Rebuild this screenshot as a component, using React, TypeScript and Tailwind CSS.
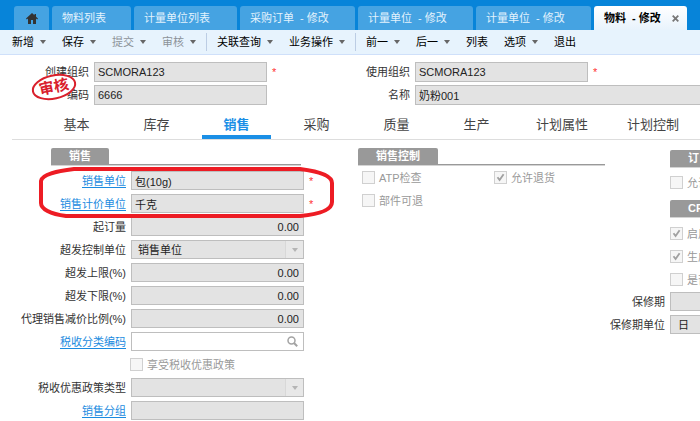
import type { ReactNode } from "react";
import clsx from "clsx";

const docTabs = [
  { title: "物料列表", width: "w-[79px]" },
  { title: "计量单位列表", width: "w-[103px]" },
  { title: "采购订单  - 修改", width: "w-[115px]" },
  { title: "计量单位  - 修改", width: "w-[115px]" },
  { title: "计量单位  - 修改", width: "w-[115px]" },
];

const toolbarGroups = [
  [
    { text: "新增", menu: true },
    { text: "保存", menu: true },
    { text: "提交", menu: true, disabled: true },
    { text: "审核", menu: true, disabled: true },
  ],
  [
    { text: "关联查询", menu: true },
    { text: "业务操作", menu: true },
  ],
  [
    { text: "前一", menu: true },
    { text: "后一", menu: true },
    { text: "列表" },
    { text: "选项", menu: true },
    { text: "退出" },
  ],
];

const pages = ["基本", "库存", "销售", "采购", "质量", "生产", "计划属性", "计划控制"];

const Caret = ({ className }: { className?: string }) => (
  <svg viewBox="0 0 6 4" className={clsx("h-1 w-[6px] shrink-0", className)}>
    <path d="M0 0h6L3 4z" fill="currentColor" />
  </svg>
);

const SectionTitle = ({ children, className }: { children: ReactNode; className?: string }) => (
  <div className={clsx("flex border-b border-[#999] shadow-[0_1px_0_#d4d4d4]", className)}>
    <h2 className="h-4 rounded-t-[2px] bg-[#999] px-[18px] leading-4 font-bold text-white">{children}</h2>
  </div>
);

const inputClass = "min-w-0 border border-[#bebebe] px-[3px] text-[#222] outline-none";

type FieldProps = {
  id: string;
  label: string;
  value?: string;
  link?: boolean;
  required?: boolean;
  number?: boolean;
  select?: boolean;
  search?: boolean;
};

const Field = ({ id, label, value = "", link, required, number, select, search }: FieldProps) => (
  <div className="flex h-[19px] items-center">
    <label htmlFor={id} className="w-[126px] shrink-0 text-right text-[#333]">
      {link ? (
        <a href="#" className="text-[#1b8be0] underline underline-offset-2">
          {label}
        </a>
      ) : (
        label
      )}
    </label>
    <div className="relative ml-[5px] flex w-[173px] shrink-0">
      {select ? (
        <>
          <select id={id} className={clsx(inputClass, "h-[19px] w-full appearance-none bg-[#e3e3e3] pl-[6px]")}>
            <option>{value}</option>
          </select>
          <span className="pointer-events-none absolute inset-y-px right-px flex w-[18px] items-center justify-center border-l border-[#d8d8d8] bg-[#e8e8e8] text-[#b5b5b5]">
            <Caret />
          </span>
        </>
      ) : (
        <input
          id={id}
          readOnly={!search}
          defaultValue={value}
          className={clsx(inputClass, "h-[19px] w-full", number && "pr-1 text-right", search ? "bg-white" : "bg-[#e3e3e3]")}
        />
      )}
      {search && (
        <svg viewBox="0 0 11 11" className="absolute top-1 right-[6px] h-[11px] w-[11px]" fill="none" stroke="#a3a3a3">
          <circle cx="4.5" cy="4.5" r="3.5" strokeWidth="1.5" />
          <path d="M7 7l3.2 3.2" strokeWidth="2" />
        </svg>
      )}
    </div>
    {required && <span className="ml-[5px] text-[#f33]">*</span>}
  </div>
);

const HeadField = ({ id, label, value, required, wide }: { id: string; label: string; value: string; required?: boolean; wide?: boolean }) => (
  <div className="flex h-5 items-center">
    <label htmlFor={id} className="w-[89px] shrink-0 text-right text-[#333]">
      {label}
    </label>
    <input
      id={id}
      readOnly
      defaultValue={value}
      className={clsx(inputClass, "ml-[5px] h-5 shrink-0 bg-[#e3e3e3]", wide ? "w-[400px]" : "w-[173px]")}
    />
    {required && <span className="ml-[5px] text-[#f33]">*</span>}
  </div>
);

const Check = ({ label, checked }: { label: string; checked?: boolean }) => (
  <label className="flex h-[19px] items-center gap-1 whitespace-nowrap text-[#999]">
    <span className="relative flex h-[13px] w-[13px] shrink-0">
      <input
        type="checkbox"
        defaultChecked={checked}
        disabled
        className="h-[13px] w-[13px] appearance-none border border-[#d0d0d0] bg-[#f6f6f6]"
      />
      {checked && (
        <svg viewBox="0 0 13 13" className="absolute inset-0 h-[13px] w-[13px]" fill="none" stroke="#a0a0a0" strokeWidth="1.8">
          <path d="M3.5 6.2L5.6 9 9.6 3.2" />
        </svg>
      )}
    </span>
    {label}
  </label>
);

const Stamp = () => (
  <svg viewBox="0 0 48 30" className="pointer-events-none absolute top-[17px] left-[30px] h-[30px] w-12">
    <g transform="rotate(-12 24 15)">
      <ellipse cx="24" cy="15" rx="21.5" ry="11.5" fill="#fff" stroke="#d9202c" strokeWidth="2" />
      <text x="24" y="20" textAnchor="middle" fontSize="15" fontWeight="700" fill="#d9202c">
        审核
      </text>
    </g>
  </svg>
);

const App = () => {
  return (
    <div className="w-full overflow-hidden bg-white font-['Liberation_Sans','Noto_Sans_CJK_SC',sans-serif] text-[11px] leading-4">
      <header className="flex h-[30px] items-end gap-[3px] overflow-hidden bg-[#0784d9] pl-[14px] whitespace-pre">
        <button aria-label="首页" className="flex h-6 w-[35px] shrink-0 items-center justify-center rounded-t-[3px] bg-[#45a3e2]">
          <svg viewBox="0 0 12 11" className="mt-px ml-px h-[11px] w-3" fill="#333">
            <path d="M6 0L0 5.6l.8.9L2 5.5V11h3V7h2v4h3V5.5l1.2 1 .8-.9-2-1.8V1H8.500v1.300z" />
          </svg>
        </button>
        {docTabs.map((tab, i) => (
          <button key={i} className={clsx("h-6 shrink-0 rounded-t-[3px] bg-[#45a3e2] pl-[10px] text-left text-[#e2f2fd]", tab.width)}>
            {tab.title}
          </button>
        ))}
        <div className="flex h-6 w-[93px] shrink-0 items-center justify-between rounded-t-[3px] bg-linear-to-b from-white to-[#e8f3fc] pr-[8px] pl-[10px] font-bold text-black">
          物料  - 修改
          <button aria-label="关闭">
            <svg viewBox="0 0 7 7" className="h-[7px] w-[7px]" stroke="#777" strokeWidth="1.8">
              <path d="M.7.7l5.6 5.6M6.300.7L.7 6.300" />
            </svg>
          </button>
        </div>
      </header>

      <div className="flex h-[25px] items-center border-b border-[#cfe0fa] bg-[#e7f3fd] pl-[2px]">
        {toolbarGroups.map((group, i) => (
          <div key={i} className={clsx("flex h-[18px] shrink-0 items-center gap-4 px-[10px]", i > 0 && "border-l border-[#bccde4]")}>
            {group.map((item) => (
              <button
                key={item.text}
                className={clsx("flex items-center gap-[6px]", item.disabled ? "text-[#8c9299]" : "text-black")}
              >
                {item.text}
                {item.menu && <Caret className="text-[#666]" />}
              </button>
            ))}
          </div>
        ))}
      </div>

      <div className="relative grid grid-cols-[321px_1fr] gap-y-[3px] pt-[7px]">
        <HeadField id="createOrg" label="创建组织" value="SCMORA123" required />
        <HeadField id="useOrg" label="使用组织" value="SCMORA123" required />
        <HeadField id="code" label="编码" value="6666" />
        <HeadField id="name" label="名称" value="奶粉001" wide />
        <Stamp />
      </div>

      <nav className="mt-[10px] ml-3 flex h-[25px] gap-[11px] border-b border-[#ddd] pl-[30px] text-[13px]">
        {pages.map((page) => (
          <button
            key={page}
            className={clsx(
              "min-w-[69px] shrink-0 border-b-4 px-[14px]",
              page === "销售" ? "border-[#1b8fe6] font-bold text-[#1b8fe6]" : "border-transparent text-[#444]"
            )}
          >
            {page}
          </button>
        ))}
      </nav>

      <main className="relative grid grid-cols-[358px_247px_1fr] pt-2">
        <section>
          <SectionTitle className="ml-[51px] w-[250px]">销售</SectionTitle>
          <div className="mt-[6px] flex flex-col gap-1">
            <Field id="saleUnit" label="销售单位" value="包(10g)" link required />
            <Field id="priceUnit" label="销售计价单位" value="千克" link required />
            <Field id="minQty" label="起订量" value="0.00" number />
            <Field id="ctrlUnit" label="超发控制单位" value="销售单位" select />
            <Field id="overMax" label="超发上限(%)" value="0.00" number />
            <Field id="overMin" label="超发下限(%)" value="0.00" number />
            <Field id="agentRate" label="代理销售减价比例(%)" value="0.00" number />
            <Field id="taxCode" label="税收分类编码" link search />
            <div className="pl-[130px]">
              <Check label="享受税收优惠政策" />
            </div>
            <Field id="taxType" label="税收优惠政策类型" select />
            <Field id="saleGroup" label="销售分组" link />
          </div>
        </section>

        <section>
          <SectionTitle>销售控制</SectionTitle>
          <div className="mt-[3px] grid grid-cols-[132px_1fr] gap-y-1 pl-1">
            <Check label="ATP检查" />
            <Check label="允许退货" checked />
            <Check label="部件可退" />
          </div>
        </section>

        <section className="min-w-0 pt-[2px]">
          <SectionTitle className="ml-[65px]">订</SectionTitle>
          <div className="mt-[6px] pl-[65px]">
            <Check label="允许" />
          </div>
          <SectionTitle className="mt-2 ml-[65px]">CR</SectionTitle>
          <div className="mt-[7px] flex flex-col gap-1 pl-[65px]">
            <Check label="启用" checked />
            <Check label="生成" checked />
            <Check label="是否" />
          </div>
          <div className="mt-[3px] flex flex-col gap-1 text-[#333]">
            <div className="flex h-[19px] items-center gap-[5px]">
              <label htmlFor="warranty" className="w-[60px] shrink-0 text-right">保修期</label>
              <input id="warranty" readOnly className={clsx(inputClass, "h-[19px] w-[173px] shrink-0 bg-[#e3e3e3]")} />
            </div>
            <div className="flex h-[19px] items-center gap-[5px]">
              <label htmlFor="warrantyUnit" className="w-[60px] shrink-0 text-right">保修期单位</label>
              <select id="warrantyUnit" className={clsx(inputClass, "h-[19px] w-[173px] shrink-0 appearance-none bg-[#e3e3e3] pl-[7px]")}>
                <option>日</option>
              </select>
            </div>
          </div>
        </section>

        <svg viewBox="0 0 297 54" className="pointer-events-none absolute top-[26px] left-[38px] h-[54px] w-[297px]" fill="none" stroke="#ed1c24" strokeWidth="4" strokeLinejoin="round">
          <path d="M36 3H262C278 5 294 9 294 17V36C294 43 284 48 262 50H28C12 48 3 43 3 37V15C4 8 20 5 36 3z" />
        </svg>
      </main>
    </div>
  );
};

export default App;
